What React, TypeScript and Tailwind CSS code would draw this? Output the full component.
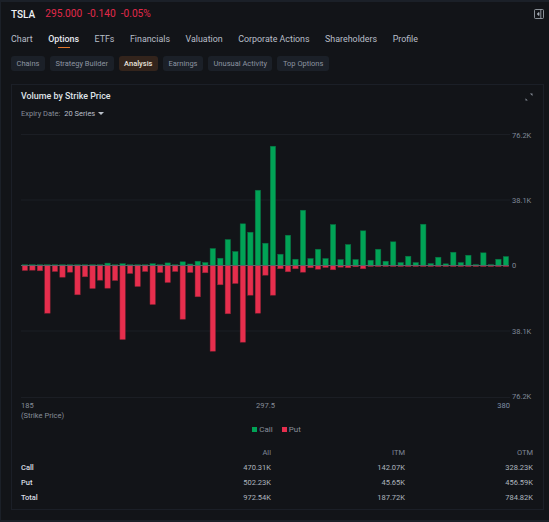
const FONT = "font-['Roboto','Liberation_Sans',sans-serif]";

// bar heights in px above / below the zero line, one per strike
const calls = [
  1, 1, 1, 1, 1, 1, 1, 1, 1, 1, 1, 2.4, 1, 1.8, 1, 1, 1, 1.8, 1, 2.6, 1, 3.7, 1.5, 4.3, 3, 17, 7.3, 26, 14, 41.7, 33.3,
  75.3, 22.3, 119.3, 11.3, 30.3, 6.3, 55.3, 7, 16.3, 7, 41, 6, 21, 6, 34.7, 5.3, 16.3, 4.3, 23.7, 3, 9.3, 3, 41.3, 2,
  8.3, 1.7, 13.3, 3, 10.3, 1.3, 12.7, 1.3, 6.3, 9,
];
const puts = [
  5, 4.7, 5.3, 47.7, 6, 11.7, 6.7, 29.3, 11.3, 23, 14.7, 22.7, 15, 74, 8, 21, 6, 39, 7, 17, 6, 53.7, 7, 31.3, 7.3,
  85.7, 19.3, 48.3, 18, 76.7, 29.7, 47.7, 9.7, 29.7, 3.3, 6.3, 3.3, 6.7, 2.3, 3.7, 2, 4.3, 1.7, 2.3, 1.3, 3.3, 1, 1, 1,
  1, 1, 1, 1, 1, 1, 1, 1, 1, 1, 1, 1, 1, 1, 1, 1,
];

const tabs = ["Chart", "Options", "ETFs", "Financials", "Valuation", "Corporate Actions", "Shareholders", "Profile"];
const chips = ["Chains", "Strategy Builder", "Analysis", "Earnings", "Unusual Activity", "Top Options"];
const rows = [
  ["Call", "470.31K", "142.07K", "328.23K"],
  ["Put", "502.23K", "45.65K", "456.59K"],
  ["Total", "972.54K", "187.72K", "784.82K"],
];

function Chart() {
  const zero = 131.5;
  return (
    <svg width="489" height="264" viewBox="0 0 489 264" className="block shrink-0">
      {[0.5, 66, 197, 263.5].map((y) => (
        <line key={y} x1="0" x2="489" y1={y} y2={y} stroke="#1b1e24" strokeWidth="1" />
      ))}
      {calls.map((h, i) => (
        <rect key={i} x={1.2 + i * 7.516} y={zero - h} width="5.4" height={h} fill={h < 1.5 ? "#0b6b3f" : "#01a356"} stroke="#0a6b40" strokeWidth="0.5" />
      ))}
      {puts.map((h, i) => (
        <rect key={i} x={1.2 + i * 7.516} y={zero} width="5.4" height={h} fill="#e62e4d" stroke="#8a2234" strokeWidth="0.5" />
      ))}
      <line x1="0" x2="488" y1={zero} y2={zero} stroke="#5c6168" strokeWidth="1.2" />
    </svg>
  );
}

export default function App() {
  return (
    <div className={`${FONT} h-[522px] w-[549px] overflow-hidden border-t-2 border-b-2 border-l border-[#1b2028] bg-[#121418] text-[#c9ced6]`}>
      <div className="flex h-[24px] items-center pl-[10px] pr-[5px]">
        <span className="text-[10px] font-medium text-[#f0f2f5]">TSLA</span>
        <div className="ml-[10px] flex gap-[5px] text-[10.2px] text-[#e0294a]">
          <span>295.000</span>
          <span>-0.140</span>
          <span>-0.05%</span>
        </div>
        <svg width="10" height="10" viewBox="0 0 10 10" fill="none" className="ml-auto" stroke="#aab0b9" strokeWidth="0.8">
          <rect x="0.5" y="0.5" width="9" height="9" rx="1" />
          <line x1="6.8" y1="0.5" x2="6.8" y2="9.5" />
          <path d="M5 3.5 3.2 5 5 6.5Z" fill="#aab0b9" />
        </svg>
      </div>

      <div className="flex h-[23px] items-start gap-[15.5px] pl-[10px] pt-[6.5px] text-[8.9px] text-[#b9bfc8]">
        {tabs.map((t) => (
          <div key={t} className="relative">
            <span className={t === "Options" ? "font-medium text-[#e6e9ee]" : ""}>{t}</span>
            {t === "Options" && <div className="absolute left-[10px] top-[14px] h-[1px] w-[12px] bg-[#e2762c]" />}
          </div>
        ))}
      </div>

      <div className="mt-[7px] flex gap-[5px] pl-[10px] text-[7.5px]">
        {chips.map((c) => (
          <div
            key={c}
            className={
              c === "Analysis"
                ? "flex h-[15px] items-center rounded-[3px] bg-[#33241c] px-[5.5px] font-medium text-[#e8e2dc]"
                : "flex h-[15px] items-center rounded-[3px] bg-[#1b2028] px-[5.5px] text-[#8d94a0]"
            }
          >
            {c}
          </div>
        ))}
      </div>

      <div className="ml-[10px] mt-[13px] h-[426px] w-[533px] border border-[#1b1f27]">
        <div className="flex items-center justify-between pl-[9px] pr-[10px] pt-[5px]">
          <span className="text-[8.9px] font-medium text-[#dfe3e8]">Volume by Strike Price</span>
          <svg width="8" height="8" viewBox="0 0 8 8" fill="#868c96">
            <path d="M7.5 0.5v2.6L4.9 0.5zM0.5 7.5V5.2L2.8 7.5z" />
          </svg>
        </div>
        <div className="mt-[5px] flex items-center pl-[9px] text-[7.5px] text-[#878e99]">
          <span>Expiry Date:</span>
          <span className="ml-[4px] text-[#b9bfc8]">20 Series</span>
          <span className="ml-[3px] h-0 w-0 border-x-[3px] border-t-[3px] border-x-transparent border-t-[#b9bfc8]" />
        </div>

        <div className="mt-[14px] flex pl-[9px]">
          <Chart />
          <div className="ml-[2px] flex h-[264px] flex-col justify-between text-[7.5px] leading-[1] text-[#7f8897]">
            <span className="-mt-[2px]">76.2K</span>
            <span>38.1K</span>
            <span>0</span>
            <span>38.1K</span>
            <span className="-mb-[3px]">76.2K</span>
          </div>
        </div>

        <div className="flex w-[498px] justify-between pl-[9px] text-[7.5px] leading-[10px] text-[#878e99]">
          <span className="mt-[3px]">185</span>
          <span className="mt-[3px]">297.5</span>
          <span className="mt-[3px] text-[#7f8fa8]">380</span>
        </div>
        <div className="pl-[9px] text-[7.5px] leading-[10px] text-[#878e99]">(Strike Price)</div>

        <div className="mt-[3px] flex justify-center gap-[9px] pr-[2px] text-[8px] leading-[12px] text-[#878e99]">
          <span className="flex items-center gap-[2px]">
            <span className="h-[5px] w-[5px] bg-[#01a356]" />
            Call
          </span>
          <span className="flex items-center gap-[2px]">
            <span className="h-[5px] w-[5px] bg-[#e62e4d]" />
            Put
          </span>
        </div>

        <div className="mt-[9px] grid grid-cols-[125px_125px_134px_128px] pl-[9px] text-right text-[7.5px] leading-[15px]">
          <div />
          <div className="text-[#7f8897]">All</div>
          <div className="text-[#7f8897]">ITM</div>
          <div className="text-[#7f8897]">OTM</div>
          {rows.map((r) => (
            <div key={r[0]} className="contents">
              <div className="text-left font-medium text-[#d8dce2]">{r[0]}</div>
              <div className="text-[#aeb5bf]">{r[1]}</div>
              <div className="text-[#aeb5bf]">{r[2]}</div>
              <div className="text-[#aeb5bf]">{r[3]}</div>
            </div>
          ))}
        </div>
      </div>
    </div>
  );
}
